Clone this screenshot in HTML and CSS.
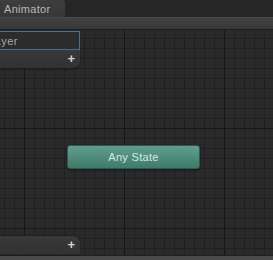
FILE: index.html
```html
<!DOCTYPE html>
<html lang="en">
<head>
  <meta charset="UTF-8" />
  <title>Animator</title>
  <link rel="stylesheet" href="styles.css">
</head>
<body>
  <div class="window">
    <div class="tabs">
      <div class="tab">Animator</div>
    </div>
    <div class="toolbar"></div>

    <div class="canvas">
      <!-- layers panel -->
      <div class="side-top">
        <div class="search">Layer</div>
        <div class="panel-row top-row"><span class="plus">+</span></div>
      </div>

      <div class="node">Any State</div>

      <div class="panel-row bottom-row"><span class="plus">+</span></div>
    </div>

    <div class="status"></div>
  </div>
</body>
</html>
```

FILE: styles.css
```css
* {
  box-sizing: border-box;
  margin: 0;
  padding: 0;
}
body {
  background-color: #282828;
  font-family: "Liberation Sans", Arial, sans-serif;
  width: 273px;
  height: 260px;
  overflow: hidden;
}
.window {
  display: flex;
  flex-direction: column;
  height: 260px;
}
.tabs {
  height: 17px;
  display: flex;
  background-color: #262626;
}
.tab {
  width: 65px;
  height: 17px;
  padding: 3px 0 0 4px;
  font-size: 11px;
  color: #b8b8b8;
  background: linear-gradient(#3e3e3e, #373737);
  border-top-right-radius: 3px;
  letter-spacing: 0.3px;
}
.toolbar {
  height: 13px;
  background: linear-gradient(#424242, #383838);
  border-top: 1px solid #4a4a4a;
  border-bottom: 1px solid #1e1e1e;
}

/* Grid */
.canvas {
  flex: 1;
  position: relative;
  background-color: #2a2a2a;
  background-image:
    repeating-linear-gradient(90deg, transparent 0 24px, #161616 24px 25px, transparent 25px 100px),
    repeating-linear-gradient(180deg, transparent 0 98px, #161616 98px 99px, transparent 99px 100px),
    repeating-linear-gradient(90deg, transparent 0 4px, #202020 4px 5px, transparent 5px 10px),
    repeating-linear-gradient(180deg, transparent 0 8px, #202020 8px 9px, transparent 9px 10px);
}
.side-top {
  position: absolute;
  top: 1px;
  left: 0;
  width: 80px;
}
.search {
  height: 19px;
  margin-left: -19px;
  padding: 3px 0 0 6px;
  width: 99px;
  font-size: 11px;
  color: #a8a8a8;
  background-color: #2c2c2c;
  border: 1px solid #4e6e92;
  letter-spacing: 0.5px;
}
.panel-row {
  height: 18px;
  width: 80px;
  background: linear-gradient(#393939, #323232);
  display: flex;
  justify-content: flex-end;
  align-items: center;
  padding-right: 5px;
}
.top-row {
  border-bottom-right-radius: 7px;
  box-shadow: 0 1px 2px #1a1a1a;
}
.bottom-row {
  position: absolute;
  left: 0;
  bottom: 1px;
  border-top-right-radius: 7px;
  box-shadow: 0 -1px 1px #1e1e1e;
}
.plus {
  color: #d4d4d4;
  font-size: 13px;
  font-weight: bold;
  line-height: 12px;
}
.node {
  position: absolute;
  left: 67px;
  top: 115px;
  width: 133px;
  height: 24px;
  border-radius: 3px;
  background: linear-gradient(#5f9f8d, #3f7a6a);
  border: 1px solid #2e5a4e;
  box-shadow: 0 1px 2px #161616;
  color: #dbe8e4;
  font-size: 11px;
  text-align: center;
  line-height: 22px;
  letter-spacing: 0.3px;
}
.status {
  height: 5px;
  background-color: #4a4a4a;
  border-top: 1px solid #1e1e1e;
}
```
